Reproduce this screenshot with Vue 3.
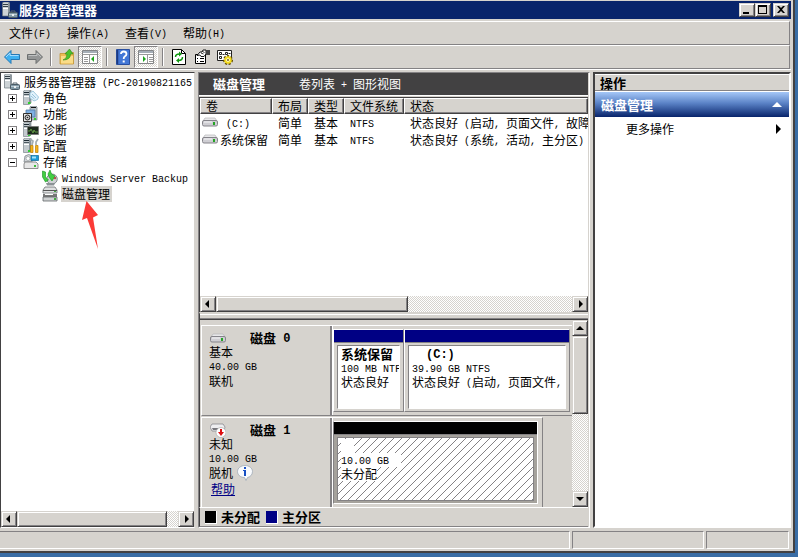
<script setup>
import { h } from 'vue'

// Splits mixed text so Latin runs take the narrow fixed-pitch face.
const Txt = (props) =>
  h(
    'span',
    { class: 'txt' },
    props.t
      .split(/([\x20-\x7e]+)/)
      .filter(Boolean)
      .map((s) => (/^[\x20-\x7e]/.test(s) ? h('span', { class: 'lat' }, s) : s)),
  )
Txt.props = ['t']

const Icon = (props) =>
  h('svg', { class: 'icon', viewBox: '0 0 16 16', 'aria-hidden': 'true' }, [h('use', { href: '#' + props.n })])
Icon.props = ['n']

const menus = ['文件(F)', '操作(A)', '查看(V)', '帮助(H)']
const nodes = [
  { icon: 'roles', name: '角色', sign: '+' },
  { icon: 'features', name: '功能', sign: '+' },
  { icon: 'diag', name: '诊断', sign: '+' },
  { icon: 'config', name: '配置', sign: '+' },
  { icon: 'storage', name: '存储', sign: '-' },
]
const heads = ['卷', '布局', '类型', '文件系统', '状态']
const volumes = [
  [' (C:)', '简单', '基本', 'NTFS', '状态良好 (启动, 页面文件, 故障'],
  ['系统保留', '简单', '基本', 'NTFS', '状态良好 (系统, 活动, 主分区)'],
]
const treeThumb = 93
const listThumb = 54
const diskThumb = 50
</script>

<template>
  <svg class="defs" aria-hidden="true">
    <symbol id="tower" viewBox="0 0 16 16">
      <path d="M.500 1l2-1h5.500v13l-2 1.500H.500z" fill="#c3cace" stroke="#6d777d" stroke-width=".6" />
      <path d="M6 1l2-1v13l-2 1.500z" fill="#8b959b" />
      <path d="M1 2.500h5" stroke="#1d2a33" />
      <path d="M1 4.500h5" stroke="#4c5960" />
      <path d="M1 6.500h5" stroke="#fff" />
      <path d="M5 12h2.500v2H5z" fill="#2fd02f" />
    </symbol>
    <symbol id="server" viewBox="0 0 16 16">
      <path d="M.500 1l1-1h5l1 1v13h-7z" fill="#cdd3d6" stroke="#6b757b" stroke-width=".7" />
      <path d="M6 1l1.500-.500V13L6 14z" fill="#8b959b" />
      <path d="M1 2.500h5M1 4.500h5" stroke="#333f47" />
      <path d="M1 6.500h5" stroke="#fff" />
      <path d="M9 11V9h4v2" fill="none" stroke="#59666e" />
      <rect x="6.500" y="10.500" width="9" height="5" rx="1" fill="#8199a6" stroke="#4b5c66" />
      <path d="M7 12.500h8" stroke="#b9cad3" />
      <path d="M10 12h2v2h-2z" fill="#e8eef0" />
    </symbol>
    <symbol id="roles" viewBox="0 0 16 16">
      <use href="#tower" />
      <path d="M7 3l3-2 5.500 6-1 2.500L11 11 7 8z" fill="#e4f3fc" stroke="#8abbd6" stroke-width=".8" />
      <path d="M9 4l4 4M8 6l3.500 3" stroke="#75aecd" stroke-width=".7" />
    </symbol>
    <symbol id="features" viewBox="0 0 16 16">
      <path d="M7 1l1-1h5l1 1v13H7z" fill="#bac3c8" stroke="#717c83" stroke-width=".7" />
      <path d="M8 1.500h5" stroke="#111" />
      <path d="M3 4h9v7H3z" fill="#7fb0e2" stroke="#527ca8" stroke-width=".8" />
      <path d="M.500 7.500h8v8h-8z" fill="#e9e9e9" stroke="#333" />
      <circle cx="4.500" cy="11.500" r="2.500" fill="#ccc" stroke="#222" />
      <circle cx="4.500" cy="11.500" r=".8" fill="#222" />
      <path d="M11 12h2v2h-2z" fill="#2fd02f" />
    </symbol>
    <symbol id="diag" viewBox="0 0 16 16">
      <use href="#tower" />
      <path d="M4.500 4.500h11v8h-11z" fill="#1d2a1e" stroke="#777" stroke-width=".8" />
      <path d="M5 9h2l1-2 2 4 1-3 1 2h3" fill="none" stroke="#6fae4c" stroke-width=".8" />
    </symbol>
    <symbol id="config" viewBox="0 0 16 16">
      <use href="#tower" />
      <path d="M7 1l3 2-1 4M15 1l-2 3v3" fill="none" stroke="#a4adb0" stroke-width="1.700" />
      <path d="M7.500 7.500h2.500v7H7.500zM12.500 7.500H15v7h-2.500z" fill="#f8b41c" stroke="#b87b00" stroke-width=".7" />
    </symbol>
    <symbol id="storage" viewBox="0 0 16 16">
      <path d="M2 2q4-3 7 0v6H1z" fill="#d3d6d8" stroke="#7d868b" stroke-width=".8" />
      <circle cx="5" cy="4.500" r="2" fill="#fff" stroke="#969da1" stroke-width=".7" />
      <path d="M8 1.500h7.500v5H8z" fill="#1d9bd8" stroke="#0b6798" stroke-width=".7" />
      <path d="M9 2.500h4v2H9z" fill="#a8e3fb" />
      <path d="M1 10l1-2h11l2 2v4.500H1z" fill="#e7e7e7" stroke="#777" stroke-width=".8" />
      <path d="M11 11h2v2h-2z" fill="#3bbd3b" />
    </symbol>
    <symbol id="backup" viewBox="0 0 16 16">
      <ellipse cx="10" cy="9" rx="5.300" ry="5" fill="#d0d3d5" stroke="#70777c" stroke-width=".8" />
      <path d="M4 13h9l-1 2.500H5z" fill="#8b9296" />
      <path d="M.500 1l3 1v5l3 3-3 2-3-5zM6 4l2-4 1.500 4L13 6l-3 5-3-4z" fill="#42cf42" stroke="#168f20" stroke-width=".6" />
      <circle cx="13" cy="8" r="1.200" fill="#b1504c" />
    </symbol>
    <symbol id="disks" viewBox="0 0 16 16">
      <path d="M3 1h10l2 3v3H1V4z" fill="#dfe0e1" stroke="#6b6f72" stroke-width=".8" />
      <path d="M1 4.500h14" stroke="#555" />
      <path d="M1 8h14v3H1z" fill="#777" />
      <path d="M1 11h14v4H1z" fill="#cfd1d2" stroke="#62676a" stroke-width=".8" />
      <path d="M3 8h8v1H3z" fill="#fff" />
      <path d="M12 12h2v2h-2zM12 5h2v1h-2z" fill="#4a4" />
    </symbol>
    <symbol id="drive" viewBox="0 0 16 16">
      <path d="M3 4h10l2 3H1z" fill="#e8e8ea" stroke="#b4b4b8" stroke-width=".7" />
      <rect x=".500" y="6.500" width="15" height="5.500" rx="1.500" fill="#cfced3" stroke="#85848a" />
      <path d="M2 8h8" stroke="#f5f5f7" />
      <path d="M11 8h2v3h-2z" fill="#24a524" />
    </symbol>
    <symbol id="drive-off" viewBox="0 0 16 16">
      <path d="M2 2h11l2 3-1 4H2L0 5z" fill="#eeeef0" stroke="#88888e" stroke-width=".8" />
      <path d="M2 6h6v2H3z" fill="#77767c" />
      <circle cx="11" cy="10.500" r="5" fill="#fff" stroke="#aaa" stroke-width=".7" />
      <path d="M10 7h2v3h2l-3 4-3-4h2z" fill="#dc1010" />
    </symbol>
    <symbol id="info" viewBox="0 0 16 16">
      <path d="M8 .500c4 0 7.500 2.500 7.500 6S13 12 10.500 12.500L9 15.500 7.500 12.500C3.500 12.500.500 10 .500 6.500S4 .500 8 .500z" fill="#f8fafd" stroke="#a0a9b5" stroke-width=".8" />
      <path d="M7 2h2v2H7zM6 5h3v6H7V6H6z" fill="#164fc4" />
    </symbol>
    <symbol id="back" viewBox="0 0 16 16">
      <path d="M.500 8L7 1.500v4h8.500v5H7v4z" fill="#3fb0f0" stroke="#2778b4" />
      <path d="M2 8l4-4v2.500h8.500" fill="none" stroke="#a5dcff" />
    </symbol>
    <symbol id="fwd" viewBox="0 0 16 16">
      <path d="M15.500 8L9 1.500v4H.500v5H9v4z" fill="#949696" stroke="#6c6f6f" />
      <path d="M1.500 6.500H10V4l4 4" fill="none" stroke="#bfc1c1" />
    </symbol>
    <symbol id="up" viewBox="0 0 16 16">
      <path d="M1 4.500h5l1-1h7.500v11.500H1z" fill="#eebc54" stroke="#c29433" stroke-width=".8" />
      <path d="M2 7h12v7.500H2z" fill="#fadc88" />
      <path d="M4 11q4-1 4-6H6l4.500-5L14 5h-2.500q0 6-7.500 6z" fill="#4cc22e" stroke="#2a8918" stroke-width=".6" />
    </symbol>
    <symbol id="pane-l" viewBox="0 0 16 16">
      <path d="M.500 1.500h15v13H.500z" fill="#fff" stroke="#848688" />
      <path d="M1 2h14v2H1z" fill="#a4adb6" />
      <path d="M1 5.500h14M7.500 6v8" stroke="#999" />
      <path d="M2 8.500h4M2 10.500h4M2 12.500h4" stroke="#999" />
      <path d="M12 7v6l-3-3z" fill="#1da51d" />
    </symbol>
    <symbol id="pane-r" viewBox="0 0 16 16">
      <path d="M.500 1.500h15v13H.500z" fill="#fff" stroke="#848688" />
      <path d="M1 2h14v2H1z" fill="#a4adb6" />
      <path d="M1 5.500h14M9.500 6v8" stroke="#999" />
      <path d="M11 8.500h4M11 10.500h4M11 12.500h4" stroke="#999" />
      <path d="M5 7v6l3-3z" fill="#1da51d" />
    </symbol>
    <symbol id="help" viewBox="0 0 16 16">
      <path d="M1.500.500h13v15h-13z" fill="#4377d6" stroke="#2a4f9f" />
      <path d="M2.500 1v14" stroke="#1c3a80" stroke-width="1.500" />
      <path d="M6 5q0-2.500 2.700-2.500T11.500 5q0 1.300-1.500 2.300T8.700 10" fill="none" stroke="#fff" stroke-width="1.800" />
      <path d="M7.700 11.500h2v2h-2z" fill="#fff" />
    </symbol>
    <symbol id="refresh" viewBox="0 0 16 16">
      <path d="M1.500.500h9l4 4v11h-13z" fill="#fff" stroke="#000" />
      <path d="M10.500.500v4h4" fill="none" stroke="#000" />
      <path d="M4.500 8q0-3 4-3" fill="none" stroke="#119a11" stroke-width="1.500" />
      <path d="M8 2.500l3 2.500-3 2.500z" fill="#119a11" />
      <path d="M11.500 8q0 3.500-4 3.500" fill="none" stroke="#119a11" stroke-width="1.500" />
      <path d="M8 9l-3 2.500L8 14z" fill="#119a11" />
    </symbol>
    <symbol id="props" viewBox="0 0 16 16">
      <path d="M1.500 5.500h10v9h-10z" fill="#fff" stroke="#000" />
      <path d="M3 9.500h1M6 9.500h4M3 12.500h1M6 12.500h4" stroke="#000" />
      <path d="M3 6.500L6 3h2l1-2h3v4L10 7.500H7L6 6z" fill="#fff" stroke="#000" stroke-width=".9" />
      <path d="M7 4l2.500 1M8.500 2.500l2 1" stroke="#000" stroke-width=".8" />
      <path d="M12 1h4v5h-4z" fill="#444" />
    </symbol>
    <symbol id="settings" viewBox="0 0 16 16">
      <path d="M.500 1.500h14v10H.500z" fill="#fff" stroke="#222" />
      <path d="M2.500 3.500h2v2h-2zM2.500 7.500h2v2h-2zM8.500 3.500h2v2h-2z" fill="none" stroke="#222" />
      <path d="M5.500 5.500h2M11.500 4.500h2" stroke="#222" />
      <circle cx="11" cy="11" r="3.800" fill="none" stroke="#5e4a00" stroke-width="2.400" stroke-dasharray="2 1.300" />
      <circle cx="11" cy="11" r="2.800" fill="#fff" stroke="#f5dc1e" stroke-width="2" />
      <circle cx="11" cy="11" r="1" fill="#806600" />
    </symbol>
  </svg>

  <div class="window">
    <header class="title">
      <Icon n="server" />
      <h1>服务器管理器</h1>
      <button class="cap raised" aria-label="最小化"><svg viewBox="0 0 12 10"><path d="M2 7h6v2H2z" /></svg></button>
      <button class="cap raised" aria-label="最大化"><svg viewBox="0 0 12 10"><path d="M1 0h9v9H1zM2 2v6h7V2z" fill-rule="evenodd" /></svg></button>
      <button class="cap close raised" aria-label="关闭"><svg viewBox="0 0 12 10"><path d="M2 1h2l2 2 2-2h2L7 4.500 10 8H8L6 6 4 8H2l3-3.500z" /></svg></button>
    </header>

    <nav class="bar menu">
      <button v-for="m in menus" :key="m"><Txt :t="m" /></button>
    </nav>

    <div class="bar tools">
      <button aria-label="后退"><Icon n="back" /></button>
      <button aria-label="前进"><Icon n="fwd" /></button>
      <i class="sep"></i>
      <button aria-label="上一级"><Icon n="up" /></button>
      <button class="on" aria-label="显示控制台树"><Icon n="pane-l" /></button>
      <i class="sep"></i>
      <button aria-label="帮助主题"><Icon n="help" /></button>
      <button class="on" aria-label="显示操作窗格"><Icon n="pane-r" /></button>
      <i class="sep"></i>
      <button aria-label="刷新"><Icon n="refresh" /></button>
      <button aria-label="属性"><Icon n="props" /></button>
      <button aria-label="设置"><Icon n="settings" /></button>
    </div>

    <main class="panes">
      <section class="tree">
        <ul>
          <li class="root"><Icon n="server" /><Txt t="服务器管理器 (PC-20190821165" /></li>
          <li v-for="n in nodes" :key="n.name" class="node">
            <button class="exp" :class="{ plus: n.sign === '+' }" :aria-label="'展开 ' + n.name"></button>
            <Icon :n="n.icon" /><span>{{ n.name }}</span>
          </li>
          <li class="leaf"><Icon n="backup" /><Txt t="Windows Server Backup" /></li>
          <li class="leaf"><Icon n="disks" /><span class="sel">磁盘管理</span></li>
        </ul>
        <svg class="pointer" viewBox="0 0 16 48" aria-hidden="true">
          <path d="M4.500 0L16 14l-5 2.500L16 48 5 17l-5 2z" fill="#fb3a36" />
        </svg>
        <div class="scroll">
          <button class="raised" aria-label="向左"><svg viewBox="0 0 12 12"><path d="M7 2v8L3 6z" /></svg></button>
          <div class="track"><div class="thumb raised" :style="{ width: treeThumb + '%' }"></div></div>
          <button class="raised" aria-label="向右"><svg viewBox="0 0 12 12"><path d="M5 2v8l4-4z" /></svg></button>
        </div>
      </section>

      <section class="center">
        <header class="banner"><h2>磁盘管理</h2><Txt t="卷列表 + 图形视图" /></header>
        <div class="list">
          <table>
            <colgroup><col class="c1" /><col class="c2" /><col class="c2" /><col class="c3" /><col /></colgroup>
            <thead><tr><th v-for="t in heads" :key="t">{{ t }}</th></tr></thead>
            <tbody>
              <tr v-for="v in volumes" :key="v[0]">
                <td v-for="(c, i) in v" :key="i" :class="{ vol: i === 0 }"><Icon v-if="i === 0" n="drive" /><Txt :t="c" /></td>
              </tr>
            </tbody>
          </table>
        </div>
        <div class="scroll">
          <button class="raised" aria-label="向左"><svg viewBox="0 0 12 12"><path d="M7 2v8L3 6z" /></svg></button>
          <div class="track"><div class="thumb raised" :style="{ width: listThumb + '%' }"></div></div>
          <button class="raised" aria-label="向右"><svg viewBox="0 0 12 12"><path d="M5 2v8l4-4z" /></svg></button>
        </div>
        <div class="split"></div>
        <div class="graph">
          <div class="disks">
            <article class="disk">
              <div class="info">
                <h3><Icon n="drive" /><Txt t="磁盘 0" /></h3>
                <p>基本</p>
                <p><Txt t="40.00 GB" /></p>
                <p class="state">联机</p>
              </div>
              <div class="parts">
                <div class="part small">
                  <div class="strip"></div>
                  <div class="body"><b>系统保留</b><Txt t="100 MB NTFS" /><span>状态良好</span></div>
                </div>
                <div class="part">
                  <div class="strip"></div>
                  <div class="body"><b class="letter"><Txt t="(C:)" /></b><Txt t="39.90 GB NTFS" /><Txt t="状态良好 (启动, 页面文件," /></div>
                </div>
              </div>
            </article>
            <article class="disk second">
              <div class="info">
                <h3><Icon n="drive-off" /><Txt t="磁盘 1" /></h3>
                <p>未知</p>
                <p><Txt t="10.00 GB" /></p>
                <p class="state">脱机<Icon n="info" /></p>
                <p class="state"><a href="#">帮助</a></p>
              </div>
              <div class="parts">
                <div class="part free">
                  <div class="strip"></div>
                  <div class="body"><b>&nbsp;</b><Txt t="10.00 GB" /><span>未分配</span></div>
                </div>
              </div>
            </article>
          </div>
          <div class="scroll vert">
            <button class="raised" aria-label="向上"><svg viewBox="0 0 12 12"><path d="M2 8h8L6 4z" /></svg></button>
            <div class="track"><div class="thumb raised" :style="{ height: diskThumb + '%' }"></div></div>
            <button class="raised" aria-label="向下"><svg viewBox="0 0 12 12"><path d="M2 4h8L6 8z" /></svg></button>
          </div>
        </div>
        <footer class="legend"><i></i><b>未分配</b><i class="navy"></i><b>主分区</b></footer>
      </section>

      <aside class="actions">
        <h2>操作</h2>
        <button class="group">磁盘管理<svg viewBox="0 0 10 6"><path d="M0 5h10L5 0z" fill="#fff" /></svg></button>
        <button class="more">更多操作<svg viewBox="0 0 10 10"><path d="M4 0v10l5-5z" /></svg></button>
      </aside>
    </main>

    <footer class="status"><span></span><span></span><span></span></footer>
  </div>
</template>

<style>
body {
  background: #396da5;
}
</style>

<style scoped>
.window {
  --face: #d6d3ce;
  --shade: #848284;
  --dark: #424142;
  box-sizing: border-box;
  display: flex;
  flex-direction: column;
  height: calc(100vh - 4px);
  margin-right: 3px;
  padding: 1px 2px 0 0;
  border-right: 2px solid var(--dark);
  border-bottom: 2px solid var(--dark);
  background: var(--face);
  color: #000;
  font: 12px/16px "Noto Sans CJK SC", sans-serif;
  white-space: nowrap;
  overflow: hidden;
}
.window *,
.window :deep(*) {
  box-sizing: border-box;
}
.defs {
  position: absolute;
  width: 0;
  height: 0;
}
:deep(.txt) {
  white-space: pre;
}
:deep(.lat) {
  font-family: "Liberation Mono", monospace;
  font-size: 10px;
  line-height: 10px;
  vertical-align: 1px;
}
h1, h2, h3, p, ul {
  margin: 0;
  padding: 0;
}
h1, h2, h3, b {
  font-size: 13px;
  font-weight: 700;
}
h3 :deep(.lat),
b :deep(.lat) {
  font-size: 12px;
}
button {
  margin: 0;
  padding: 0;
  border: 0;
  background: none;
  color: inherit;
  font: inherit;
  text-align: left;
}
svg {
  display: block;
}
.icon {
  flex: none;
  width: 16px;
  height: 16px;
}
.raised {
  background: var(--face);
  border: 1px solid;
  border-color: var(--face) var(--dark) var(--dark) var(--face);
  box-shadow: inset 1px 1px #fff, inset -1px -1px var(--shade);
}
.title {
  display: flex;
  align-items: center;
  height: 18px;
  padding: 0 2px;
  background: #08246b;
  color: #fff;
}
.title h1 {
  flex: 1;
  margin-left: 1px;
  line-height: 16px;
}
.cap {
  width: 16px;
  height: 14px;
  padding: 1px;
  color: #000;
}
.cap.close {
  margin-left: 2px;
}
.bar {
  display: flex;
  align-items: center;
  height: 24px;
  margin-right: 1px;
  border-top: 1px solid #fff;
  border-right: 1px solid var(--shade);
  border-bottom: 1px solid var(--shade);
}
.menu {
  margin-top: 2px;
  padding-left: 1px;
}
.menu button {
  padding: 0 8px;
}
.tools button {
  display: flex;
  align-items: center;
  justify-content: center;
  width: 23px;
  height: 22px;
}
.tools .on {
  width: 24px;
  border: 1px solid;
  border-color: var(--shade) #fff #fff var(--shade);
  background: repeating-conic-gradient(#fff 0 25%, var(--face) 0 50%) 0 0 / 2px 2px;
}
.sep {
  width: 2px;
  height: 18px;
  margin: 0 3px 0 4px;
  border-left: 1px solid var(--shade);
  border-right: 1px solid #fff;
}
.panes {
  display: flex;
  flex: 1;
  min-height: 0;
  padding-top: 2px;
  border-top: 1px solid #fff;
}
.tree {
  position: relative;
  display: flex;
  flex-direction: column;
  width: 195px;
  border: 1px solid;
  border-color: var(--dark) var(--face) #fff var(--dark);
  background: #fff;
  overflow: hidden;
}
.tree ul {
  flex: 1;
  list-style: none;
  padding-top: 1px;
  overflow: hidden;
}
.tree li {
  display: flex;
  align-items: center;
  height: 16px;
  gap: 4px;
}
.tree .root {
  padding-left: 3px;
}
.tree .node {
  padding-left: 7px;
}
.tree .leaf {
  padding-left: 41px;
}
.exp {
  width: 9px;
  height: 9px;
  margin-right: 2px;
  border: 1px solid var(--shade);
  background: linear-gradient(#000, #000) 1px 3px / 5px 1px no-repeat;
}
.exp.plus {
  background: linear-gradient(#000, #000) 1px 3px / 5px 1px no-repeat, linear-gradient(#000, #000) 3px 1px / 1px 5px no-repeat;
}
.sel {
  height: 16px;
  margin-left: -1px;
  padding: 0 2px 0 1px;
  background: var(--face);
}
.pointer {
  position: absolute;
  left: 81px;
  top: 128px;
  width: 16px;
  height: 48px;
}
.scroll {
  display: flex;
  flex: none;
  height: 16px;
}
.scroll button {
  width: 16px;
  height: 16px;
  padding: 1px;
}
.track {
  flex: 1;
  background: repeating-conic-gradient(#fff 0 25%, var(--face) 0 50%) 0 0 / 2px 2px;
}
.thumb {
  height: 100%;
}
.scroll.vert {
  flex-direction: column;
  width: 16px;
  height: auto;
}
.center {
  display: flex;
  flex: 1;
  flex-direction: column;
  min-width: 0;
  margin: 0 3px;
  padding-right: 1px;
  border: 1px solid;
  border-color: var(--shade) #fff #fff var(--shade);
}
.banner {
  display: flex;
  align-items: center;
  height: 23px;
  padding-left: 14px;
  gap: 34px;
  border-bottom: 1px solid #fff;
  background: var(--dark);
  color: #fff;
}
.list {
  flex: 1;
  min-height: 0;
  margin-top: 1px;
  border: solid var(--dark);
  border-width: 1px 0 0 1px;
  background: #fff;
  overflow: hidden;
}
.center > .scroll,
.split,
.graph,
.legend {
  border-left: 1px solid var(--dark);
}
table {
  width: 100%;
  table-layout: fixed;
  border-collapse: separate;
  border-spacing: 0;
}
.c1 { width: 72px; }
.c2 { width: 36px; }
.c3 { width: 60px; }
th {
  height: 16px;
  padding: 0 0 0 5px;
  border: 1px solid;
  border-color: #fff var(--dark) var(--dark) #fff;
  box-shadow: inset -1px -1px var(--shade);
  background: var(--face);
  font-weight: 400;
  line-height: 14px;
  text-align: left;
}
td {
  height: 17px;
  padding: 0 0 0 6px;
  line-height: 17px;
  vertical-align: top;
  overflow: hidden;
}
td.vol {
  padding-left: 2px;
}
.vol .icon {
  float: left;
  margin-right: 2px;
}
.split {
  height: 8px;
  border-top: 2px solid var(--face);
  border-bottom: 1px solid var(--dark);
  box-shadow: inset 0 1px #fff, inset 0 -1px var(--shade);
}
.graph {
  display: flex;
  height: 187px;
}
.disks {
  flex: 1;
  min-width: 0;
  padding: 5px 0 0 1px;
}
.disk {
  display: flex;
  height: 91px;
  border-top: 1px solid #fff;
  border-left: 1px solid #fff;
  border-bottom: 1px solid var(--shade);
}
.info {
  width: 130px;
  padding: 5px 0 0 7px;
  border-right: 2px solid var(--shade);
  line-height: 14px;
}
.info h3 {
  display: flex;
  align-items: center;
  height: 14px;
  gap: 24px;
  padding-left: 1px;
}
.state {
  display: flex;
  align-items: center;
  height: 16px;
  gap: 4px;
}
.info a {
  padding-left: 2px;
  color: #000084;
}
.parts {
  display: flex;
  flex: 1;
  min-width: 0;
  padding: 3px 2px 3px 0;
  border-left: 1px solid #fff;
}
.part {
  display: flex;
  flex: 1;
  flex-direction: column;
  min-width: 0;
  border: 1px solid;
  border-color: #fff var(--shade) var(--shade) #fff;
}
.part.small {
  flex: 0 0 71px;
}
.strip {
  height: 13px;
  border-bottom: 1px solid var(--shade);
  background: #000084;
}
.body {
  display: flex;
  flex: 1;
  flex-direction: column;
  margin: 2px 3px;
  padding: 1px 2px 0 3px;
  border: 1px solid;
  border-color: var(--shade) #fff #fff var(--shade);
  background: #fff;
  line-height: 14px;
  overflow: hidden;
}
.letter {
  padding-left: 14px;
}
.second {
  margin-right: 29px;
  margin-top: 1px;
  height: 90px;
  border-right: 1px solid var(--shade);
  border-bottom: 0;
}
.second .parts {
  padding-right: 4px;
}
.free {
  border-color: #fff #fff #fff var(--shade);
  background: #a5a29c;
}
.free .strip {
  background: #000;
}
.free .body {
  align-items: flex-start;
  border-color: var(--shade);
  background: linear-gradient(to bottom right, transparent 46%, #848284 46% 54%, transparent 54%) 0 0 / 8px 8px #fff;
}
.free .body > * {
  background: #fff;
}
.free b {
  padding-right: 10px;
}
.free .body :deep(.txt) {
  padding-right: 12px;
}
.legend {
  display: flex;
  align-items: center;
  height: 20px;
  padding-left: 5px;
  gap: 4px;
  border-top: 1px solid #fff;
  border-bottom: 1px solid var(--shade);
  line-height: 14px;
}
.legend i {
  width: 12px;
  height: 13px;
  border: solid #fff;
  border-width: 0 1px 1px 0;
  background: #000;
}
.legend .navy {
  margin-left: 2px;
  background: #000084;
}
.actions {
  width: 198px;
  border: 2px solid;
  border-color: var(--dark) #fff #fff var(--dark);
  background: #fff;
}
.actions h2 {
  height: 17px;
  padding-left: 5px;
  border-top: 1px solid #fff;
  border-bottom: 1px solid var(--shade);
  background: var(--face);
  line-height: 15px;
}
.actions button {
  display: flex;
  align-items: center;
  justify-content: space-between;
  width: 100%;
  height: 24px;
}
.actions svg {
  width: 10px;
}
.actions .group {
  height: 26px;
  padding: 0 7px 0 6px;
  border-top: 1px solid #fff;
  background: linear-gradient(#a5c7f7, #5a82c6 45%, #08246b);
  color: #fff;
  font-size: 13px;
  font-weight: 700;
}
.actions .more {
  padding: 0 7px 0 31px;
}
.status {
  display: flex;
  height: 23px;
  padding: 3px 2px 2px 0;
  gap: 2px;
}
.status span {
  flex: 0 1 132px;
  border: 1px solid;
  border-color: var(--shade) #fff #fff var(--shade);
}
.status span:first-child {
  flex: 1;
  border-left: 0;
}
.status span:last-child {
  flex-basis: 83px;
}
</style>
